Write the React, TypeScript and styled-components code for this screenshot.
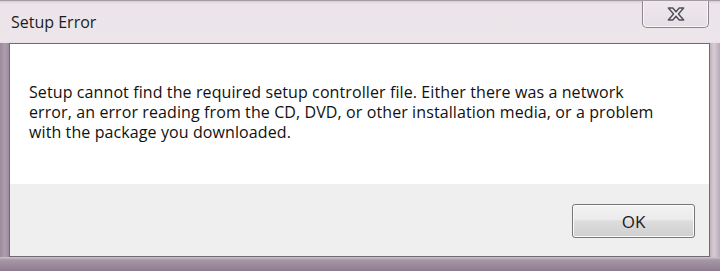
import React from "react";
import styled, { createGlobalStyle } from "styled-components";

const Global = createGlobalStyle`
  html, body { margin: 0; padding: 0; background: #8c7c8d; }
  body { font-family: "Open Sans", "Noto Sans", sans-serif; }
`;

const Window = styled.div`
  width: 720px;
  height: 271px;
  box-sizing: border-box;
  display: flex;
  flex-direction: column;
  background:
    linear-gradient(180deg, #d9d1d8 0px, #ebe4ea 3px, #ece6eb 40px, #e6dde5 43px, #e2d8e1 100%);
  border-top: 1px solid #a39aa3;
  overflow: hidden;
`;

const TitleBar = styled.div`
  height: 42px;
  display: flex;
  align-items: flex-start;
  justify-content: space-between;
  padding: 0 11px 0 11px;
`;

const Title = styled.div`
  font-size: 16px;
  color: #1c1c1c;
  margin-top: 10px;
`;

const CloseButton = styled.button`
  width: 67px;
  height: 28px;
  margin-top: -1px;
  border: 1px solid #8d8590;
  border-top: none;
  border-radius: 0 0 5px 5px;
  background: linear-gradient(180deg, #eee8ed 0%, #e6dfe5 100%);
  box-shadow: inset 0 0 0 1px rgba(255,255,255,0.7);
  display: flex;
  align-items: center;
  justify-content: center;
  padding: 0;
`;

const Frame = styled.div`
  flex: 1;
  display: flex;
  flex-direction: column;
  padding: 0 10px 0 9px;
  background: linear-gradient(90deg, #9b8b9c 0px, #ae9fae 5px, #9a8a9b 9px, transparent 9px, transparent 709px, #b8aab6 709px, #d8ccd6 714px, #b9a8b8 720px);
`;

const Client = styled.div`
  height: 212px;
  display: flex;
  flex-direction: column;
  border: 1px solid #6f6a71;
  box-shadow: 0 1px 0 #f4eff3, 0 2px 0 #7a6b7b;
  background: #ffffff;
`;

const Message = styled.div`
  height: 140px;
  box-sizing: border-box;
  padding: 38px 20px 0 19px;
  font-size: 16px;
  letter-spacing: 0.1px;
  line-height: 20px;
  color: #111111;
  background: #ffffff;
  white-space: nowrap;
`;

const Line = styled.div`
  height: 20px;
`;

const Footer = styled.div`
  flex: 1;
  display: flex;
  justify-content: flex-end;
  align-items: flex-start;
  padding: 20px 14px 0 0;
  background: #efefef;
`;

const OkButton = styled.button`
  width: 123px;
  height: 34px;
  border: 1px solid #777777;
  border-radius: 3px;
  background: linear-gradient(180deg, #f3f3f3 0%, #ebebeb 45%, #dddddd 50%, #cfcfcf 100%);
  box-shadow: inset 0 0 0 1px #fbfbfb;
  font-family: "Open Sans", "Noto Sans", sans-serif;
  font-size: 17px;
  color: #1a1a1a;
  padding: 0;
`;

const BottomFrame = styled.div`
  flex: 1;
  margin: 0 -10px 0 -9px;
  background: linear-gradient(180deg, #cfc3ce 0px, #a797a7 3px, #8e7c8f 100%);
`;

const CloseIcon = () => (
  <svg width="24" height="18" viewBox="0 0 22 16">
    <path
      d="M4 2.5 L8 2.5 L11 6 L14 2.5 L18 2.5 L13.2 8 L18 13.5 L14 13.5 L11 10 L8 13.5 L4 13.5 L8.8 8 Z"
      fill="#f2eef1"
      stroke="#555158"
      strokeWidth="1.4"
      strokeLinejoin="round"
    />
  </svg>
);

const lines = [
  "Setup cannot find the required setup controller file. Either there was a network",
  "error, an error reading from the CD, DVD, or other installation media, or a problem",
  "with the package you downloaded.",
];

export default function App() {
  return (
    <>
      <Global />
      <Window>
        <TitleBar>
          <Title>Setup Error</Title>
          <CloseButton aria-label="Close">
            <CloseIcon />
          </CloseButton>
        </TitleBar>
        <Frame>
          <Client>
            <Message>
              {lines.map((l) => (
                <Line key={l}>{l}</Line>
              ))}
            </Message>
            <Footer>
              <OkButton>OK</OkButton>
            </Footer>
          </Client>
          <BottomFrame />
        </Frame>
      </Window>
    </>
  );
}
